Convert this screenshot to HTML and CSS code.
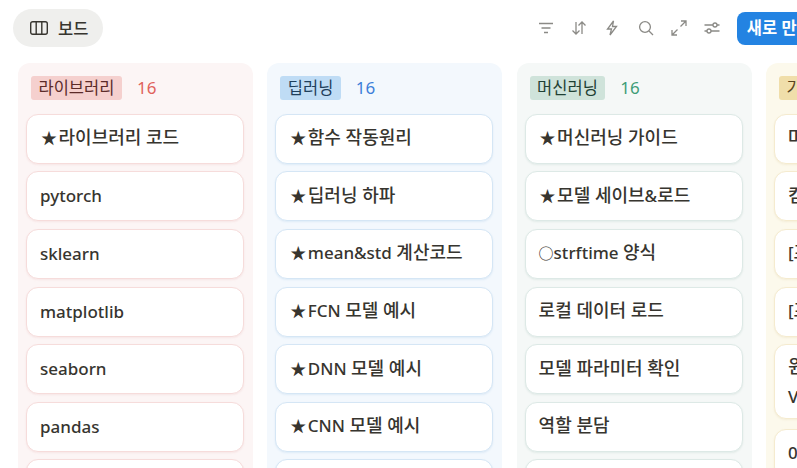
FILE: index.html
```html
<!DOCTYPE html>
<html lang="ko">
<head>
<meta charset="utf-8">
<title>보드</title>
<link rel="stylesheet" href="styles.css">
</head>
<body>
<div class="toolbar">
  <div class="tab">
    <svg class="tab-icon" width="18" height="14" viewBox="0 0 18 14" fill="none" stroke="#37352f" stroke-width="1.4"><rect x="0.7" y="0.7" width="16.6" height="12.6" rx="2"/><path d="M6.2 1v12M11.8 1v12"/></svg>
    <span>보드</span>
  </div>
  <div class="actions">
    <svg class="ico" viewBox="0 0 16 16"><path d="M1 3.5h14M3.5 8h9M6 12.5h4"/></svg>
    <svg class="ico" viewBox="0 0 16 16"><path d="M5 2v12M1.5 10.5L5 14l3.5-3.5M11 14V2M7.5 5.5L11 2l3.5 3.5"/></svg>
    <svg class="ico" viewBox="0 0 16 16"><path d="M9.5 1L3.5 9h4l-1.5 6 6.5-8.5H8.5z"/></svg>
    <svg class="ico" viewBox="0 0 16 16"><circle cx="7" cy="7" r="5.4"/><path d="M11 11l4 4"/></svg>
    <svg class="ico" viewBox="0 0 16 16"><path d="M9.5 6.5L15 1M10 1h5v5M6.5 9.5L1 15M1 10v5h5"/></svg>
    <svg class="ico" viewBox="0 0 16 16"><path d="M0.5 5h8.5M13 5h2.5M0.5 11h2.5M7 11h8.5"/><circle cx="11" cy="5" r="2"/><circle cx="5" cy="11" r="2"/></svg>
    <div class="new-btn">새로 만들기</div>
  </div>
</div>
<div class="board">
  <section class="col col-red">
    <div class="col-head"><span class="tag">라이브러리</span><span class="count">16</span></div>
    <div class="card"><div><span class="star">★</span><span class="ko">라이브러리 코드</span></div></div>
    <div class="card"><div>pytorch</div></div>
    <div class="card"><div>sklearn</div></div>
    <div class="card"><div>matplotlib</div></div>
    <div class="card"><div>seaborn</div></div>
    <div class="card"><div>pandas</div></div>
    <div class="card"><div>numpy</div></div>
  </section>
  <section class="col col-blue">
    <div class="col-head"><span class="tag">딥러닝</span><span class="count">16</span></div>
    <div class="card"><div><span class="star">★</span><span class="ko">함수 작동원리</span></div></div>
    <div class="card"><div><span class="star">★</span><span class="ko">딥러닝 하파</span></div></div>
    <div class="card"><div><span class="star">★</span><span class="lat">mean&amp;std</span> <span class="ko">계산코드</span></div></div>
    <div class="card"><div><span class="star">★</span><span class="lat">FCN</span> <span class="ko">모델 예시</span></div></div>
    <div class="card"><div><span class="star">★</span><span class="lat">DNN</span> <span class="ko">모델 예시</span></div></div>
    <div class="card"><div><span class="star">★</span><span class="lat">CNN</span> <span class="ko">모델 예시</span></div></div>
    <div class="card"><div><span class="star">★</span><span class="lat">RNN</span> <span class="ko">모델 예시</span></div></div>
  </section>
  <section class="col col-green">
    <div class="col-head"><span class="tag">머신러닝</span><span class="count">16</span></div>
    <div class="card"><div><span class="star">★</span><span class="ko">머신러닝 가이드</span></div></div>
    <div class="card"><div><span class="star">★</span><span class="ko">모델 세이브</span><span class="lat">&amp;</span><span class="ko">로드</span></div></div>
    <div class="card"><div><span class="circle">○</span><span class="lat">strftime</span> <span class="ko">양식</span></div></div>
    <div class="card"><div><span class="ko">로컬 데이터 로드</span></div></div>
    <div class="card"><div><span class="ko">모델 파라미터 확인</span></div></div>
    <div class="card"><div><span class="ko">역할 분담</span></div></div>
    <div class="card"><div><span class="ko">데이터 전처리</span></div></div>
  </section>
  <section class="col col-yellow">
    <div class="col-head"><span class="tag">기타</span><span class="count">16</span></div>
    <div class="card"><div><span class="ko">마크다운 문법</span></div></div>
    <div class="card"><div><span class="ko">컴퓨터 설정</span></div></div>
    <div class="card"><div><span class="lat">[</span><span class="ko">프로그램</span><span class="lat">]</span> <span class="ko">설치</span></div></div>
    <div class="card"><div><span class="lat">[</span><span class="ko">프로그램</span><span class="lat">]</span> <span class="ko">설정</span></div></div>
    <div class="card card-tall"><div><span class="ko">윈도우 터미널 설치 및</span> VS&nbsp;Code</div></div>
    <div class="card"><div><span class="lat">0.</span> <span class="ko">참고 자료</span></div></div>
  </section>
</div>
</body>
</html>
```
FILE: styles.css
```css
* { box-sizing: border-box; }
html, body {
  margin: 0;
  height: 468px;
  overflow: hidden;
  background: #fff;
}
body {
  width: 797px;
  font-family: "Noto Sans", "Noto Sans CJK KR", sans-serif;
  color: #37352f;
}
.toolbar {
  display: flex;
  align-items: center;
  justify-content: space-between;
  height: 63px;
  padding: 9px 0 16px 13px;
}
.tab {
  display: flex;
  align-items: center;
  gap: 10px;
  width: 90px;
  height: 38px;
  padding-left: 17px;
  border-radius: 19px;
  background: #efefed;
  font-size: 16.5px;
  font-weight: 500;
}
.actions {
  display: flex;
  align-items: center;
  gap: 17.4px;
  flex: none;
  width: 279px;
  padding-left: 19.5px;
  overflow: hidden;
}
.ico {
  flex: none;
  width: 16px;
  height: 16px;
  fill: none;
  stroke: #8b8a86;
  stroke-width: 1.3;
}
.new-btn {
  flex: none;
  margin-left: -1px;
  height: 33px;
  padding: 0 10px;
  border-radius: 8px;
  background: #2383e2;
  color: #fff;
  font-size: 16.5px;
  font-weight: 600;
  line-height: 31px;
  white-space: nowrap;
}
.board {
  display: flex;
  gap: 14.3px;
  padding-left: 18px;
}
.col {
  flex: none;
  width: 235px;
  height: 460px;
  padding: 12px 9px 0 8px;
  border-radius: 12px;
}
.col-head {
  display: flex;
  align-items: center;
  gap: 15px;
  height: 25px;
  margin: 0 0 13.8px 5px;
}
.tag {
  height: 24px;
  padding: 0 7.5px;
  border-radius: 3px;
  font-size: 16.5px;
  line-height: 23px;
  white-space: nowrap;
}
.count { font-size: 17px; }
.card {
  display: flex;
  align-items: center;
  min-height: 50px;
  margin-bottom: 7.6px;
  padding: 7px 13px;
  background: #fff;
  border: 1px solid;
  border-radius: 12px;
  font-size: 17px;
  font-weight: 500;
  line-height: 28px;
  color: #37352f;
  word-break: keep-all;
}
.card-tall { margin-bottom: 9.5px; }
.ko {
  font-size: 18px;
  vertical-align: 2px;
}
.lat { vertical-align: 2px; }
.star {
  margin: 0 1.5px 0 1px;
  font-size: 16px;
  vertical-align: 2px;
}
.circle {
  font-size: 15px;
  vertical-align: 2px;
}
.col-red { background: #fcf5f5; }
.col-red .tag { background: #f5d0ce; color: #5c2b29; }
.col-red .count { color: #e0625c; }
.col-red .card { border-color: #f6dcdb; box-shadow: 0 1px 2px rgba(224, 150, 150, .15); }
.col-blue { background: #f3f8fd; }
.col-blue .tag { background: #bfdcf5; color: #1f3f5c; }
.col-blue .count { color: #3d7fd9; }
.col-blue .card { border-color: #d5e6f5; box-shadow: 0 1px 2px rgba(130, 175, 220, .18); }
.col-green { background: #f5f8f7; }
.col-green .tag { background: #cfe3da; color: #1f4033; }
.col-green .count { color: #3f9d78; }
.col-green .card { border-color: #dde9e6; box-shadow: 0 1px 2px rgba(140, 175, 165, .18); }
.col-yellow { background: #fcf9ec; }
.col-yellow .tag { background: #f0deaa; color: #5a4520; }
.col-yellow .count { color: #c49a30; }
.col-yellow .card { border-color: #f5ebcf; box-shadow: 0 1px 2px rgba(210, 190, 130, .18); }
```
